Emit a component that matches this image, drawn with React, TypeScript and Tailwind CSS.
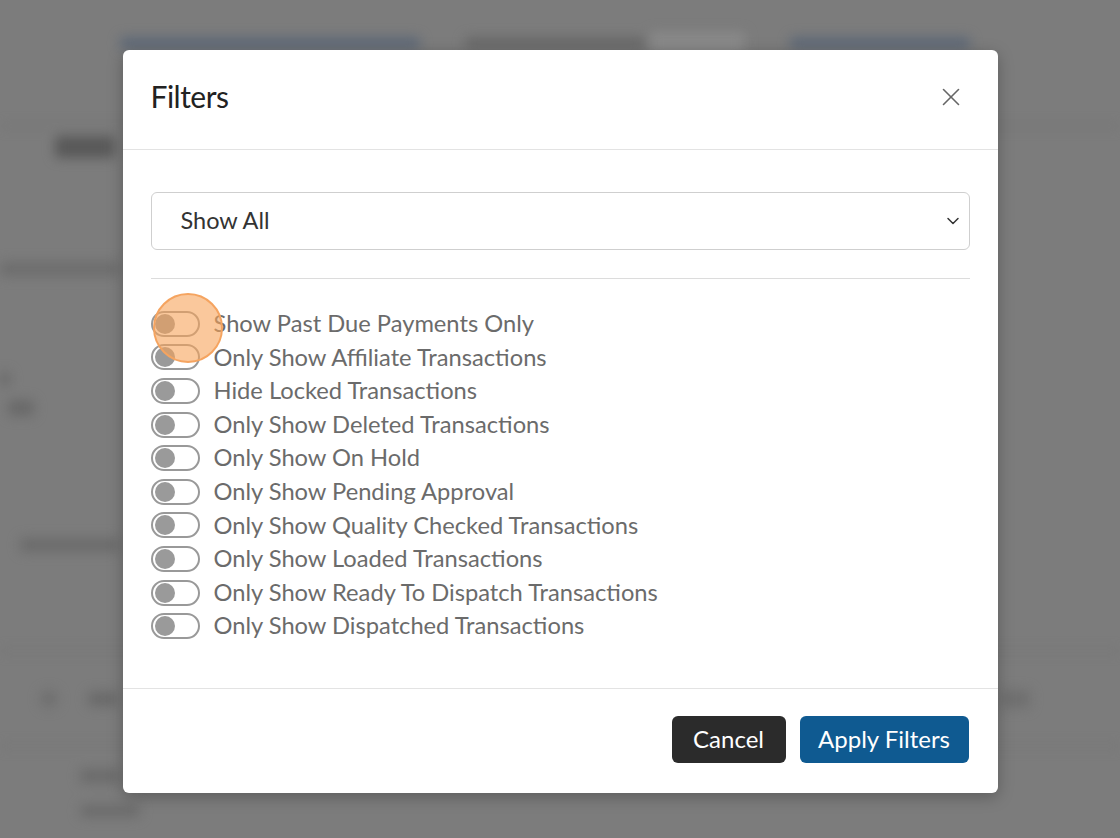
import { X, ChevronDown } from "lucide-react";

const filtros = [
  "Show Past Due Payments Only",
  "Only Show Affiliate Transactions",
  "Hide Locked Transactions",
  "Only Show Deleted Transactions",
  "Only Show On Hold",
  "Only Show Pending Approval",
  "Only Show Quality Checked Transactions",
  "Only Show Loaded Transactions",
  "Only Show Ready To Dispatch Transactions",
  "Only Show Dispatched Transactions",
];

export default function App() {
  return (
    <div className="relative h-[838px] w-[1120px] overflow-hidden bg-[#7c7c7c] font-['Lato',sans-serif]">
      {/* página de fundo, escurecida e desfocada */}
      <div className="flex h-full flex-col blur-[6px]">
        <div className="flex h-[86px] items-center gap-[45px] pl-[120px]">
          <div className="h-[12px] w-[300px] rounded bg-[#5d6877]" />
          <div className="h-[12px] w-[180px] rounded bg-[#686868]" />
          <div className="-ml-[40px] h-[22px] w-[95px] rounded bg-[#898989]" />
          <div className="h-[12px] w-[180px] rounded bg-[#5d6877]" />
        </div>
        <div className="h-[39px]" />
        <div className="h-[2px] bg-[#717171]" />
        <div className="flex h-[40px] items-center pl-[55px]">
          <div className="h-[22px] w-[60px] rounded bg-[#595959]" />
        </div>
        <div className="flex h-[123px] items-end pb-[14px]">
          <div className="h-[14px] w-[120px] rounded bg-[#6d6d6d]" />
        </div>
        <div className="flex h-[140px] flex-col gap-[14px] pt-[82px]">
          <div className="h-[14px] w-[10px] rounded bg-[#696969]" />
          <div className="ml-[8px] h-[16px] w-[26px] rounded bg-[#696969]" />
        </div>
        <div className="flex h-[170px] items-end pb-[48px] pl-[20px]">
          <div className="h-[14px] w-[100px] rounded bg-[#6b6b6b]" />
        </div>
        <div className="h-[50px]" />
        <div className="h-[2px] bg-[#737373]" />
        <div className="flex h-[93px] items-center justify-between pl-[40px] pr-[90px]">
          <div className="flex items-center gap-[30px]">
            <div className="h-[18px] w-[18px] rounded-full bg-[#6f6f6f]" />
            <div className="h-[14px] w-[30px] rounded bg-[#696969]" />
          </div>
          <div className="h-[18px] w-[30px] rounded bg-[#6f6f6f]" />
        </div>
        <div className="h-[2px] bg-[#747474]" />
        <div className="flex flex-col gap-[22px] pl-[80px] pt-[22px]">
          <div className="h-[14px] w-[40px] rounded bg-[#6b6b6b]" />
          <div className="h-[12px] w-[60px] rounded bg-[#6b6b6b]" />
        </div>
      </div>

      {/* camada do modal */}
      <div className="absolute inset-0 flex justify-center pt-[50px]">
        <div className="flex h-[743px] w-[875px] flex-col rounded-md bg-white shadow-[0_4px_16px_rgba(0,0,0,0.25)]">
          <div className="flex h-[100px] items-center justify-between border-b border-[#e3e3e3] pb-[6px] pl-[28px] pr-[32px]">
            <h2 className="text-[30px] font-normal tracking-[-0.5px] text-[#222]">
              Filters
            </h2>
            <X className="h-[30px] w-[30px] text-[#666]" strokeWidth={1.3} />
          </div>

          <div className="flex-1 px-[28px] pt-[42px]">
            <div className="flex h-[58px] items-center justify-between rounded-md border border-[#cfcfcf] pl-[29px] pr-[6px]">
              <span className="text-[23.5px] text-[#333]">Show All</span>
              <ChevronDown className="h-[20px] w-[20px] text-[#333]" strokeWidth={1.8} />
            </div>

            <div className="mt-[28px] h-px bg-[#dcdcdc]" />

            <div className="mt-[28px] flex flex-col">
              {filtros.map((rotulo) => (
                <div key={rotulo} className="flex h-[33.6px] items-center gap-[14px]">
                  {/* interruptor desligado */}
                  <div className="flex h-[26px] w-[49px] items-center rounded-full border-2 border-[#999] px-[2px]">
                    <div className="h-[20px] w-[20px] rounded-full bg-[#9a9a9a]" />
                  </div>
                  <span className="text-[23.7px] text-[#6b6b6b]">{rotulo}</span>
                </div>
              ))}
            </div>
          </div>

          <div className="flex h-[105px] items-center justify-end gap-[14px] border-t border-[#e3e3e3] px-[29px] pb-[4px]">
            <button className="h-[47px] w-[114px] rounded-md bg-[#2b2b2b] text-[24px] text-white">
              Cancel
            </button>
            <button className="h-[47px] w-[169px] rounded-md bg-[#0f5a91] text-[24px] text-white">
              Apply Filters
            </button>
          </div>
        </div>
      </div>

      {/* destaque do clique */}
      <div className="absolute left-[153px] top-[293px] h-[70px] w-[70px] rounded-full border-2 border-[#f5a460] bg-[#f7a35a]/60" />
    </div>
  );
}
